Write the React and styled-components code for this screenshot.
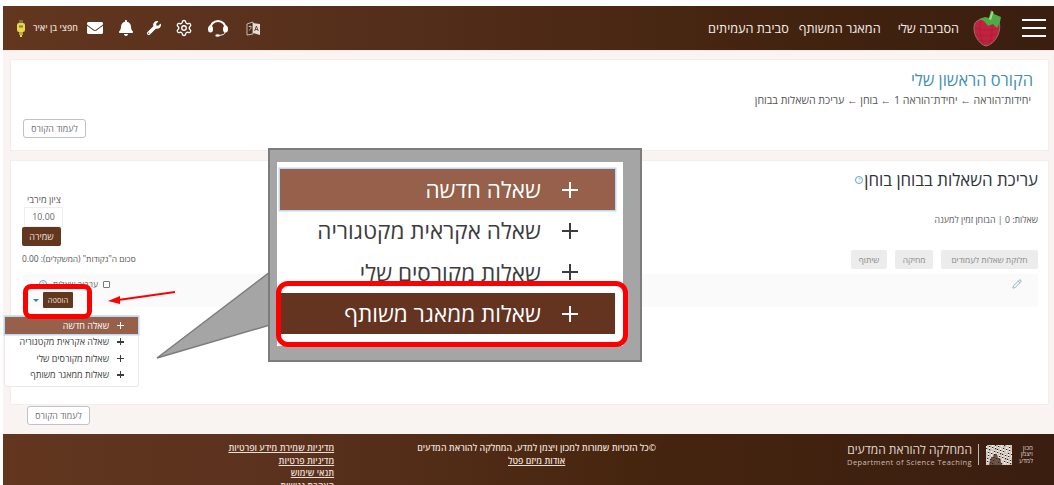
import React from 'react';
import styled, { createGlobalStyle } from 'styled-components';
import { FaEnvelope, FaBell, FaWrench } from 'react-icons/fa';
import { Settings, Pencil } from 'lucide-react';

const Global = createGlobalStyle`
  html, body { margin: 0; padding: 0; height: 485px; overflow: hidden; background: #fff; }
  body { font-family: "Open Sans", "Liberation Sans", "DejaVu Sans", sans-serif; }
  * { box-sizing: border-box; }
`;

const Page = styled.div`
  position: relative;
  width: 1054px;
  height: 485px;
  overflow: hidden;
  padding: 6px 0 0 3px;
  direction: rtl;
  color: #4a4a4a;
`;

const Header = styled.header`
  height: 44px;
  display: flex;
  align-items: center;
  padding: 0 8px 0 14px;
  background: linear-gradient(270deg, #3a1e10 0%, #42230f 25%, #57301c 70%, #62361f 100%);
  color: #fff;
`;

const Burger = styled.div`
  width: 24px;
  height: 18px;
  display: flex;
  flex-direction: column;
  justify-content: space-between;
  margin-left: 20px;
  span { display: block; height: 2px; background: #fff; }
`;

const BrandLink = styled.a`
  font-size: 12.7px;
  color: #f4eee9;
  margin-right: ${p => p.$gap}px;
  white-space: nowrap;
`;

const IconBar = styled.div`
  margin-right: auto;
  display: flex;
  align-items: center;
  color: #fff;
`;

const IconSlot = styled.div`
  display: flex;
  align-items: center;
  justify-content: center;
  margin-left: ${p => p.$gap}px;
`;

const UserName = styled.span`
  font-size: 8.8px;
  font-weight: 600;
  color: #e6d9cf;
  margin-left: 8px;
  white-space: nowrap;
`;

const Body = styled.main`
  height: 384px;
  background: #f9f4f1;
  padding: 8px 5px 0 7px;
  border-top: 1px solid #f0e7e1;
`;

const Card = styled.section`
  background: #fff;
  border: 1px solid #f3eeea;
  height: ${p => p.$h}px;
  margin-bottom: ${p => p.$mb || 0}px;
  padding: ${p => p.$pad};
`;

const CourseTitle = styled.h1`
  margin: 0;
  font-size: 16.4px;
  line-height: 18px;
  font-weight: 400;
  color: #3f8fb2;
`;

const Crumbs = styled.div`
  margin-top: 4px;
  font-size: 10.6px;
  line-height: 14px;
  color: #555;
  padding-right: 2px;
`;

const OutlineButton = styled.button`
  display: block;
  width: ${p => p.$w}px;
  height: 19px;
  padding: 0;
  font: inherit;
  font-size: 8.8px;
  color: #6f6f6f;
  background: #fff;
  border: 1px solid #bfc3c7;
  border-radius: 3px;
`;

const CourseAction = styled.div`
  display: flex;
  justify-content: flex-end;
  margin-top: 12px;
`;

const EditTitle = styled.h2`
  margin: 0;
  font-size: 16.8px;
  line-height: 22px;
  font-weight: 400;
  color: #2e3338;
  display: flex;
  align-items: center;
`;

const HelpDot = styled.span`
  width: 8px;
  height: 8px;
  border-radius: 50%;
  border: 1px solid #5da5c4;
  color: #5da5c4;
  font-size: 6px;
  line-height: 6px;
  text-align: center;
  display: inline-block;
  margin-right: 1px;
  direction: ltr;
`;

const Toolbar = styled.div`
  display: flex;
  justify-content: space-between;
  height: 83px;
`;

const ToolbarMain = styled.div`
  padding-top: 23px;
  font-size: 8.8px;
  line-height: 12px;
  color: #555;
`;

const GreyActions = styled.div`
  display: flex;
  gap: 8px;
  margin-top: 24px;
`;

const GreyButton = styled.span`
  width: ${p => p.$w}px;
  height: 19px;
  line-height: 19px;
  text-align: center;
  font-size: 8.4px;
  background: #ececec;
  color: #888;
  border-radius: 2px;
  white-space: nowrap;
`;

const ScoreBox = styled.div`
  width: 120px;
  padding-top: 3px;
  font-size: 9.2px;
  color: #555;
`;

const ScoreLabel = styled.div`
  width: 40px;
  text-align: center;
  margin-right: auto;
  margin-left: 2px;
  line-height: 12px;
  white-space: nowrap;
`;

const ScoreInput = styled.div`
  width: 39px;
  height: 20px;
  margin-top: 1px;
  margin-right: auto;
  margin-left: 2px;
  border: 1px solid #eee;
  font-size: 8.8px;
  line-height: 18px;
  text-align: center;
  color: #666;
  direction: ltr;
`;

const SaveButton = styled.div`
  width: 39px;
  height: 19px;
  margin-right: auto;
  background: #63361f;
  color: #f0e4da;
  font-size: 9px;
  line-height: 19px;
  text-align: center;
  border-radius: 2px;
`;

const SumLine = styled.div`
  margin-top: 7px;
  line-height: 12px;
  text-align: left;
  white-space: nowrap;
  font-size: 8.4px;
`;

const QuestionRow = styled.div`
  height: 33px;
  background: #fafafa;
  display: flex;
  justify-content: space-between;
  padding: 5px 16px 0 0;
  color: #7ba9c4;
`;

const ShuffleColumn = styled.div`
  width: 90px;
  font-size: 8.5px;
  color: #666;
`;

const ShuffleLine = styled.div`
  display: flex;
  align-items: center;
  gap: 5px;
  line-height: 10px;
  padding-right: 2px;
  white-space: nowrap;
`;

const Check = styled.span`
  width: 7px;
  height: 7px;
  flex: none;
  border: 1px solid #777;
  border-radius: 1px;
  background: #fff;
`;

const AddLine = styled.div`
  display: flex;
  align-items: center;
  gap: 4px;
  margin-top: 3px;
  padding-right: 39px;
`;

const AddButton = styled.div`
  width: 30px;
  height: 16px;
  background: #63361f;
  color: #f0e4da;
  font-size: 7.5px;
  line-height: 16px;
  text-align: center;
  border-radius: 1px;
`;

const Caret = styled.span`
  width: 0;
  height: 0;
  border: 3px solid transparent;
  border-top: 3px solid #3c7fa6;
  margin-top: 3px;
`;

const BottomAction = styled.div`
  display: flex;
  justify-content: flex-end;
  padding: 1px 0 0 17px;
`;

const Footer = styled.footer`
  height: 51px;
  display: flex;
  align-items: flex-start;
  padding: 8px 21px 0 0;
  overflow: hidden;
  background: linear-gradient(270deg, #3a1e10 0%, #46250f 40%, #5b321e 75%, #62361f 100%);
  color: #eadfd6;
  font-size: 8.8px;
  line-height: 12.5px;
`;

const LogoBlock = styled.div`
  display: flex;
  align-items: center;
  gap: 1px;
  flex: none;
  margin-top: 0;
`;

const LogoWord = styled.div`
  width: 20px;
  font-size: 6.4px;
  line-height: 6.6px;
  color: #d8cfc8;
  text-align: right;
`;

const LogoDivider = styled.div`
  width: 1px;
  height: 21px;
  background: #bbb;
  margin: 0 6px 0 5px;
`;

const DeptText = styled.div`
  color: #e3dad3;
  font-size: 12px;
  line-height: 15px;
  white-space: nowrap;
`;

const DeptEnglish = styled.div`
  font-size: 7.5px;
  line-height: 10px;
  letter-spacing: .4px;
  direction: ltr;
  text-align: right;
  color: #c9bdb4;
  white-space: nowrap;
`;

const Copy = styled.div`
  margin-right: 191px;
  flex: none;
  text-align: center;
  font-weight: 600;
  white-space: nowrap;
`;

const Links = styled.div`
  margin-right: 83px;
  flex: none;
  font-weight: 600;
`;

const FooterLink = styled.a`
  display: block;
  text-decoration: underline;
  white-space: nowrap;
`;

const Overlay = styled.svg`
  position: absolute;
  left: 0;
  top: 0;
  pointer-events: none;
`;

const CalloutBox = styled.div`
  position: absolute;
  left: 268px;
  top: 148px;
  width: 374px;
  height: 214px;
  background: #a5a5a5;
  border: 2px solid #7c7c7c;
  padding: 12px 17px 0 7px;
`;

const Menu = styled.ul`
  list-style: none;
  margin: 0;
  background: #fff;
  ${p => p.$big ? `
    height: 184px;
    padding: 7px 8px 0 3px;
  ` : `
    position: absolute;
    left: 4px;
    top: 315px;
    width: 135px;
    height: 72px;
    padding: 1px 0 0;
    border: 1px solid #ece9e6;
    border-radius: 3px;
  `}
`;

const MenuItem = styled.li`
  display: flex;
  align-items: center;
  height: ${p => p.$big ? 41.3 : 16.5}px;
  font-size: ${p => p.$big ? 22.5 : 9}px;
  padding-right: ${p => p.$big ? 37 : 14}px;
  gap: ${p => p.$big ? 21 : 8}px;
  white-space: nowrap;
  color: ${p => p.$tone === 'plain' ? '#3c3c3c' : '#fff'};
  background: ${p => p.$tone === 'active' ? '#96604a' : p.$tone === 'dark' ? '#643421' : 'transparent'};
  ${p => p.$tone === 'active' ? 'box-shadow: 0 0 0 1.5px #b9d9f5;' : ''}
`;

const Plus = styled.span`
  position: relative;
  flex: none;
  width: ${p => p.$big ? 16 : 7}px;
  height: ${p => p.$big ? 16 : 7}px;
  &::before, &::after { content: ""; position: absolute; background: currentColor; }
  &::before { left: 0; right: 0; top: calc(50% - ${p => p.$big ? 1 : .75}px); height: ${p => p.$big ? 2 : 1.5}px; }
  &::after { top: 0; bottom: 0; left: calc(50% - ${p => p.$big ? 1 : .75}px); width: ${p => p.$big ? 2 : 1.5}px; }
`;

const RedFrame = styled.div`
  position: absolute;
  left: ${p => p.$l}px;
  top: ${p => p.$t}px;
  width: ${p => p.$w}px;
  height: ${p => p.$h}px;
  border: 5px solid #ff0000;
  border-radius: ${p => p.$r}px;
`;

const Berry = () => (
  <svg width="30" height="37" viewBox="0 0 30 37">
    <path d="M3 13 C7 7 22 7 27 12 C30 20 24 34 14 36 C7 35 -1 22 3 13Z" fill="#c0223f" stroke="#8f7566" strokeWidth="1" />
    <g stroke="#9c1a38" strokeWidth=".5" fill="none">
      <path d="M3 18q11 4 24 0M3 24q10 4 22 0M7 30q7 3 14 0M9 11q-3 12 3 24M19 10q3 12-2 25" />
    </g>
    <path d="M7 9 L13 7 L17 8 L19 0 L22 4 L29 7 L28 12 L25 18 L21 14 L16 16 L12 11Z" fill="#4cab45" />
    <path d="M17 9 L20 1 L21.5 2 L19 10Z" fill="#a3dc86" />
  </svg>
);

const Bulb = () => (
  <svg width="8" height="17" viewBox="0 0 8 17">
    <rect x="2" y="0" width="4" height="3" fill="#7d7350" />
    <rect x="0" y="3" width="8" height="9" rx="2" fill="#e7d94a" />
    <rect x="2" y="5.5" width="4" height="2" fill="#8a7d36" />
    <rect x="2" y="12" width="4" height="3" fill="#b8a93a" />
    <rect x="3" y="15" width="2" height="2" fill="#e7d94a" />
  </svg>
);

const Headset = () => (
  <svg width="22" height="20" viewBox="0 0 22 20" fill="none">
    <path d="M3 12 C3 0 19 0 19 12" stroke="#fff" strokeWidth="2" />
    <ellipse cx="3.5" cy="11" rx="2.5" ry="3.6" fill="#fff" />
    <ellipse cx="18.5" cy="11" rx="2.5" ry="3.6" fill="#fff" />
    <path d="M18 14q0 3-6 3.4" stroke="#fff" strokeWidth="1" />
    <ellipse cx="10.5" cy="17.5" rx="2.2" ry="1.3" fill="#fff" />
  </svg>
);

const Translate = () => (
  <svg width="15" height="15" viewBox="0 0 15 15">
    <path d="M1 3 L7 1 V13 L1 14Z" fill="#4a2b1a" stroke="#e8dcd4" strokeWidth=".8" />
    <path d="M7 2 L14 3 V14 L7 12Z" fill="#e8dcd4" />
    <path d="M8.6 10 L10.4 5 L12.3 10 M9.2 8.5 H11.7" stroke="#4a2b1a" strokeWidth=".8" fill="none" />
    <path d="M2.6 5.5 H5.6 M4 4.5 V6 M2.8 9.5 Q5 8.5 5.2 6" stroke="#e8dcd4" strokeWidth=".7" fill="none" />
  </svg>
);

const speckle = Array.from({ length: 140 }, (_, i) => ({
  x: (i * 7) % 26,
  y: (i * 11) % 19,
  o: i % 3 === 0 ? '#3a1e10' : '#f2ece6',
}));

const InstituteMark = () => (
  <svg width="26" height="20" viewBox="0 0 26 20">
    <rect width="26" height="20" fill="#cfc8c1" />
    {speckle.map((s, i) => <rect key={i} x={s.x} y={s.y} width="1.2" height="1.2" fill={s.o} />)}
    <path d="M3 20 L5 12 h2 l1-3 h3 l1 4 h2 l2 7Z" fill="#3a1e10" opacity=".7" />
  </svg>
);

const menuRows = [
  ['active', 'שאלה חדשה'],
  ['plain', 'שאלה אקראית מקטגוריה'],
  ['plain', 'שאלות מקורסים שלי'],
  ['dark', 'שאלות ממאגר משותף'],
];

export default function App() {
  return (
    <Page>
      <Global />
      <Header>
        <Burger><span /><span /><span /></Burger>
        <Berry />
        <BrandLink $gap={13}>הסביבה שלי</BrandLink>
        <BrandLink $gap={17}>המאגר המשותף</BrandLink>
        <BrandLink $gap={10}>סביבת העמיתים</BrandLink>
        <IconBar>
          <IconSlot $gap={17}><Translate /></IconSlot>
          <IconSlot $gap={14}><Headset /></IconSlot>
          <IconSlot $gap={14}><Settings size={18} strokeWidth={1.8} /></IconSlot>
          <IconSlot $gap={13}><FaWrench size={14} /></IconSlot>
          <IconSlot $gap={15}><FaBell size={16} /></IconSlot>
          <IconSlot $gap={9}><FaEnvelope size={16} /></IconSlot>
          <UserName>חפצי בן יאיר</UserName>
          <Bulb />
        </IconBar>
      </Header>
      <Body>
        <Card $h={92} $mb={9} $pad="11px 15px 0 12px">
          <CourseTitle>הקורס הראשון שלי</CourseTitle>
          <Crumbs>יחידות־הוראה ← יחידת־הוראה 1 ← בוחן ← עריכת השאלות בבוחן</Crumbs>
          <CourseAction><OutlineButton $w={63}>לעמוד הקורס</OutlineButton></CourseAction>
        </Card>
        <Card $h={245} $pad="8px 10px 0 11px">
          <EditTitle>עריכת השאלות בבוחן בוחן<HelpDot>?</HelpDot></EditTitle>
          <Toolbar>
            <ToolbarMain>
              <div>שאלות: 0 | הבוחן זמין למענה</div>
              <GreyActions>
                <GreyButton $w={97}>חלוקת שאלות לעמודים</GreyButton>
                <GreyButton $w={38}>מחיקה</GreyButton>
                <GreyButton $w={36}>שיתוף</GreyButton>
              </GreyActions>
            </ToolbarMain>
            <ScoreBox>
              <ScoreLabel>ציון מירבי</ScoreLabel>
              <ScoreInput>10.00</ScoreInput>
              <SaveButton>שמירה</SaveButton>
              <SumLine>סכום ה"נקודות" (המשקלים): 0.00</SumLine>
            </ScoreBox>
          </Toolbar>
          <QuestionRow>
            <Pencil size={10} />
            <ShuffleColumn>
              <ShuffleLine><Check />ערבוב שאלות <HelpDot>?</HelpDot></ShuffleLine>
              <AddLine><AddButton>הוספה</AddButton><Caret /></AddLine>
            </ShuffleColumn>
          </QuestionRow>
        </Card>
        <BottomAction><OutlineButton $w={63}>לעמוד הקורס</OutlineButton></BottomAction>
      </Body>
      <Footer>
        <LogoBlock>
          <LogoWord>מכון ויצמן למדע</LogoWord>
          <InstituteMark />
          <LogoDivider />
          <div>
            <DeptText>המחלקה להוראת המדעים</DeptText>
            <DeptEnglish>Department of Science Teaching</DeptEnglish>
          </div>
        </LogoBlock>
        <Copy>
          <div>©כל הזכויות שמורות למכון ויצמן למדע, המחלקה להוראת המדעים</div>
          <FooterLink>אודות מיזם פטל</FooterLink>
        </Copy>
        <Links>
          <FooterLink>מדיניות שמירת מידע ופרטיות</FooterLink>
          <FooterLink>מדיניות פרטיות</FooterLink>
          <FooterLink>תנאי שימוש</FooterLink>
          <FooterLink>הצהרת נגישות</FooterLink>
        </Links>
      </Footer>

      <Overlay width="1054" height="485">
        <polygon points="157,358 270,272 270,325" fill="#a5a5a5" stroke="#7c7c7c" strokeWidth="1.5" />
        <line x1="175" y1="292" x2="118" y2="300" stroke="#f00" strokeWidth="2" />
        <polygon points="108,301 120,296 120,304" fill="#f00" />
      </Overlay>
      <CalloutBox>
        <Menu $big>
          {menuRows.map(([tone, label]) => (
            <MenuItem key={label} $big $tone={tone}><Plus $big />{label}</MenuItem>
          ))}
        </Menu>
      </CalloutBox>
      <Menu>
        {menuRows.map(([tone, label]) => (
          <MenuItem key={label} $tone={tone === 'dark' ? 'plain' : tone}><Plus />{label}</MenuItem>
        ))}
      </Menu>
      <RedFrame $l={276} $t={281} $w={352} $h={66} $r={12} />
      <RedFrame $l={23} $t={284} $w={69} $h={35} $r={8} />
    </Page>
  );
}
